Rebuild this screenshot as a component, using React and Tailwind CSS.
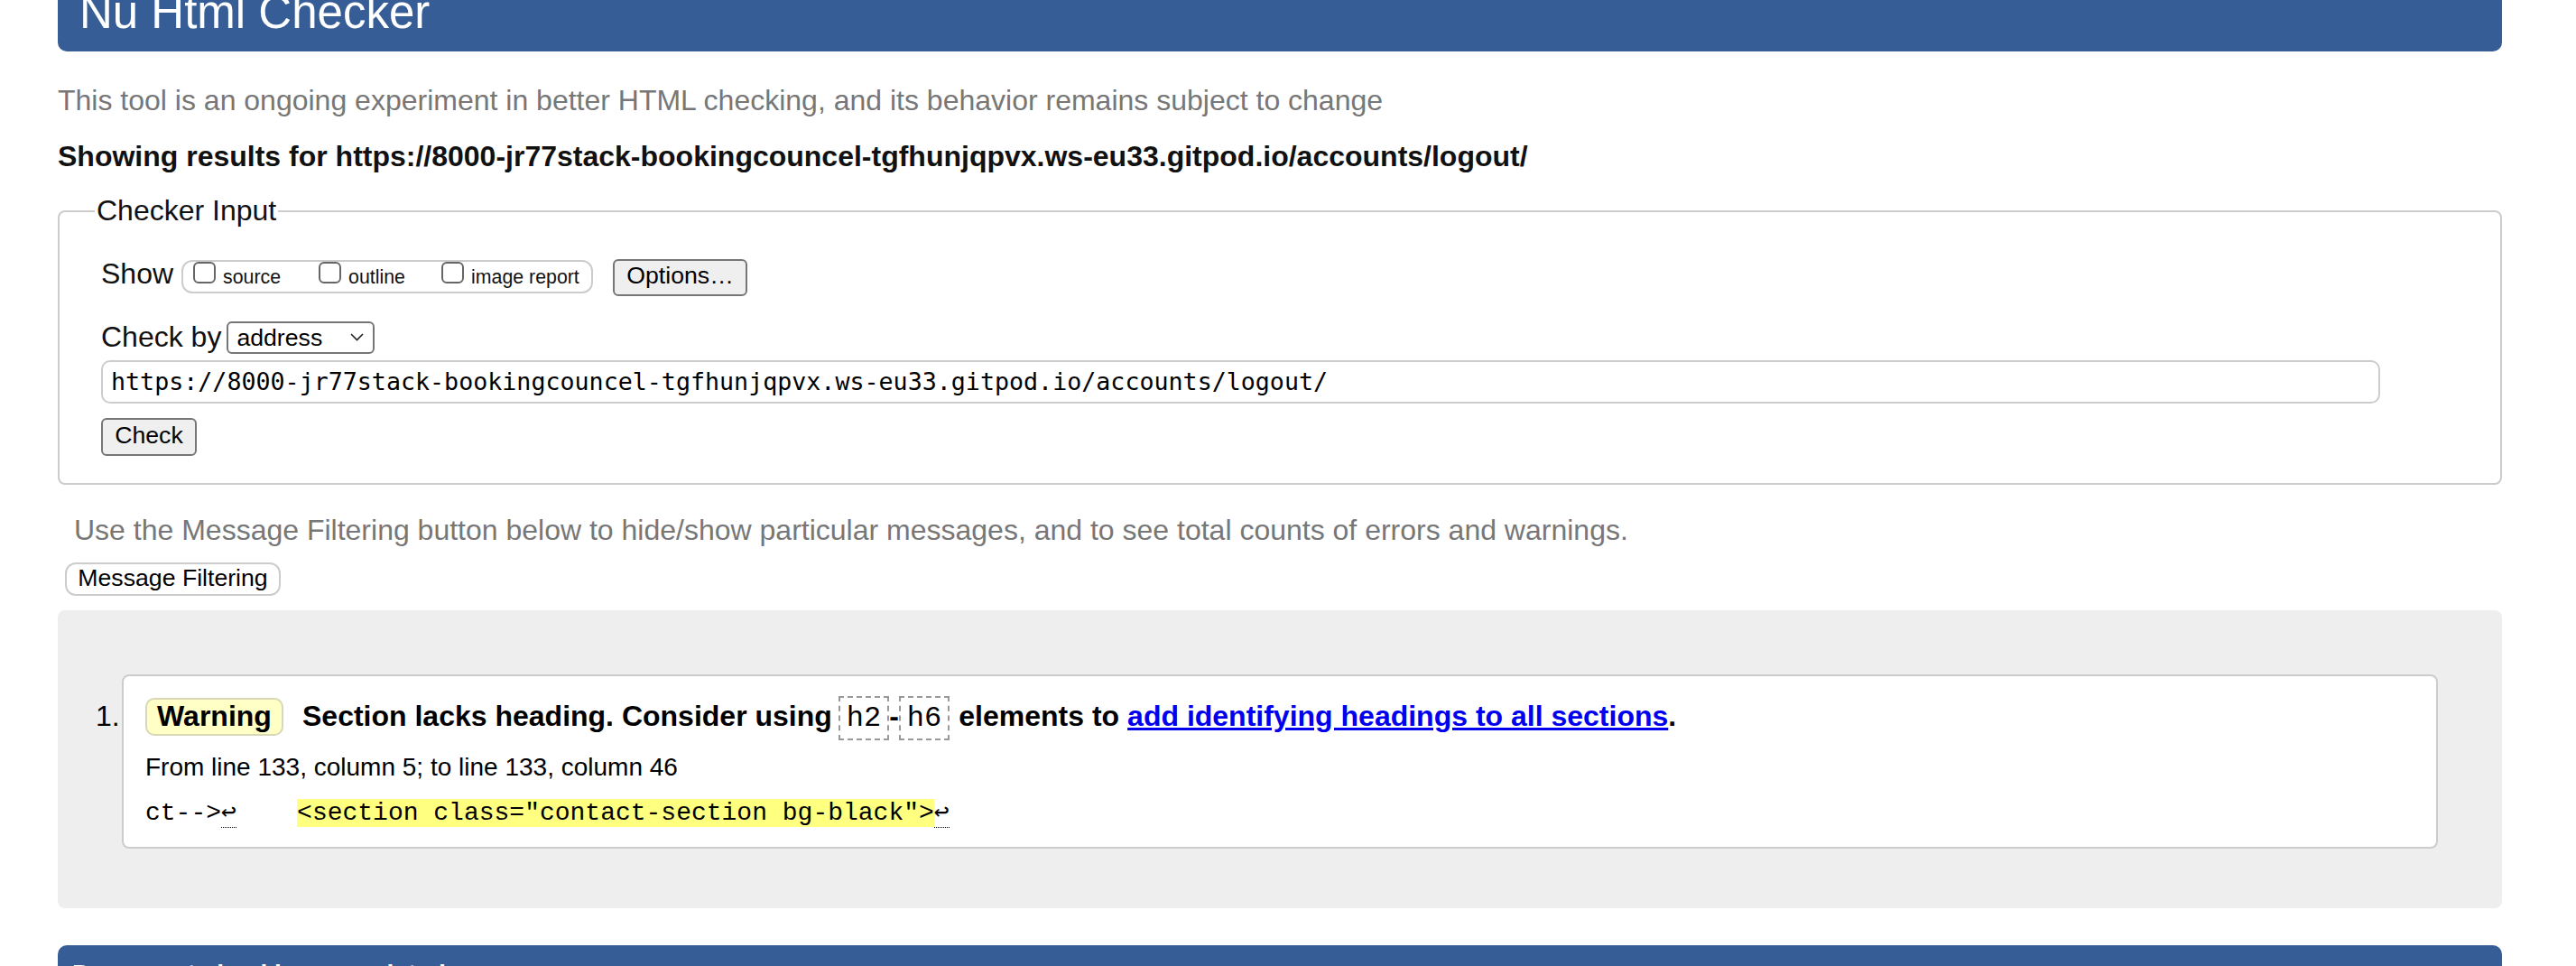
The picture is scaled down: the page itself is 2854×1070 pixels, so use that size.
import React from 'react';

const checkedUrl = 'https://8000-jr77stack-bookingcouncel-tgfhunjqpvx.ws-eu33.gitpod.io/accounts/logout/';

function ShowOption({ label, className }) {
    return (
        <span className={className}>
            <span className="inline-block w-[25px] h-[24px] border-2 border-[#666] rounded-[6px] bg-white" />
            <span className="ml-[8px]">{label}</span>
        </span>
    );
}

function CodeBox({ children, className = '' }) {
    return (
        <code className={`h-[49px] pt-[1px] px-[7px] border-2 border-dashed border-[#999] font-['Liberation_Mono','DejaVu_Sans_Mono',monospace] text-[32px] leading-[44px] font-normal ${className}`}>
            {children}
        </code>
    );
}

export default function App() {
    return (
        <div className="h-[1070px] overflow-hidden bg-white text-[#111] font-['Liberation_Sans',Arial,sans-serif] text-[32px] leading-[37px]">
            <div className="ml-[64px] w-[2708px]">
                {/* Header */}
                <div className="h-[57px] overflow-hidden bg-[#365d95] rounded-b-[10px] flex flex-col justify-end pl-[24px] pb-[18px]">
                    <h1 className="text-white text-[51px] leading-[50px] font-normal whitespace-nowrap">Nu Html Checker</h1>
                </div>

                <p className="mt-[36px] text-[#777]">
                    This tool is an ongoing experiment in better HTML checking, and its behavior remains subject to change
                </p>
                <p className="mt-[25px] font-bold whitespace-nowrap">Showing results for {checkedUrl}</p>

                {/* Checker input */}
                <fieldset className="mt-[23px] border-2 border-[#ccc] rounded-[8px] pl-[46px] pb-[30px]">
                    <legend className="-ml-[7px] px-[2px]">Checker Input</legend>

                    <div className="mt-[33px] flex items-baseline whitespace-nowrap">
                        <span>Show</span>
                        <span className="ml-[9px] inline-block w-[456px] h-[37px] border-2 border-[#ccc] rounded-[12px] pl-[11px] text-[21.33px] leading-[33px] whitespace-nowrap">
                            <ShowOption label="source" className="inline-block w-[139px]" />
                            <ShowOption label="outline" className="inline-block w-[136px]" />
                            <ShowOption label="image report" className="inline-block" />
                        </span>
                        <button className="ml-[22px] w-[149px] border-2 border-[#767676] rounded-[6px] bg-[#efefef] text-[26.67px] leading-[33px] pb-[4px] text-center text-black">
                            Options…
                        </button>
                    </div>

                    <div className="mt-[27px] flex items-center h-[37px]">
                        <span>Check by</span>
                        <div className="ml-[6px] w-[164px] h-[36px] border-2 border-[#767676] rounded-[6px] flex items-center justify-between pl-[9px] pr-[10px] text-[26.67px] leading-[32px] text-black">
                            <span>address</span>
                            <svg width="15" height="9" viewBox="0 0 15 9" fill="none">
                                <polyline points="1,1 7.5,7.5 14,1" stroke="#222" strokeWidth="1.6" />
                            </svg>
                        </div>
                    </div>

                    <div className="mt-[7px] w-[2525px] h-[48px] border-2 border-[#ccc] rounded-[10px] pl-[9px] font-['DejaVu_Sans_Mono',monospace] text-[26.67px] leading-[44px] whitespace-nowrap text-black">
                        {checkedUrl}
                    </div>

                    <button className="mt-[16px] block w-[106px] border-2 border-[#767676] rounded-[6px] bg-[#efefef] text-[26.67px] leading-[35px] pb-[3px] text-center text-black">
                        Check
                    </button>
                </fieldset>

                <p className="mt-[32px] ml-[18px] text-[#777]">
                    Use the Message Filtering button below to hide/show particular messages, and to see total counts of errors and warnings.
                </p>
                <button className="mt-[17px] ml-[8px] block w-[239px] border-2 border-[#ccc] rounded-[12px] bg-white text-[26.67px] leading-[31px] pb-[2px] text-center text-black">
                    Message Filtering
                </button>

                {/* Results */}
                <div className="mt-[16px] h-[330px] bg-[#eee] rounded-[8px] pt-[71px] flex">
                    <span className="w-[71px] pl-[42px] pt-[28px] text-black">1.</span>
                    <div className="w-[2566px] self-start bg-white border-2 border-[#ccc] rounded-[8px] pl-[24px] pt-[22px] pb-[21px] text-black">
                        <div className="flex items-baseline whitespace-nowrap">
                            <span className="w-[153px] h-[42px] border-2 border-[#d8d8b4] bg-[#ffffc6] rounded-[10px] text-center font-bold leading-[36px]">
                                Warning
                            </span>
                            <span className="ml-[21px] font-bold">Section lacks heading. Consider using</span>
                            <CodeBox className="ml-[7px]">h2</CodeBox>
                            <span className="font-bold">-</span>
                            <CodeBox>h6</CodeBox>
                            <span className="ml-[10px] mr-[9px] font-bold">elements to</span>
                            <a href="#" className="font-bold text-[#0000ee] underline">add identifying headings to all sections</a>
                            <span className="font-bold">.</span>
                        </div>

                        <p className="mt-[14px] text-[28px] leading-[32px]">From line 133, column 5; to line 133, column 46</p>

                        <p className="mt-[19px] whitespace-pre font-['Liberation_Mono','DejaVu_Sans_Mono',monospace] text-[28px] leading-[32px]">
                            ct--&gt;<span className="border-b border-dotted border-black">↩</span>
                            {'    '}
                            <span className="bg-[#ffff80]">&lt;section class="contact-section bg-black"&gt;</span>
                            <span className="border-b border-dotted border-black">↩</span>
                        </p>
                    </div>
                </div>

                {/* Bottom bar */}
                <div className="mt-[41px] h-[80px] bg-[#365d95] rounded-t-[10px] pl-[16px] pt-[16px]">
                    <h2 className="text-white font-bold text-[28px] leading-[32px] whitespace-nowrap">Document checking completed.</h2>
                </div>
            </div>
        </div>
    );
}
